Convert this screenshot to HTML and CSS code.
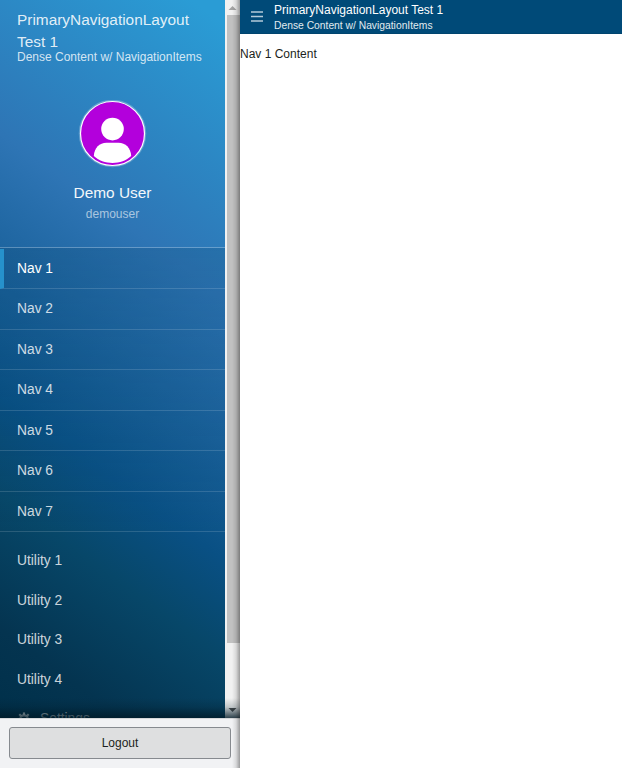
FILE: index.html
```html
<!DOCTYPE html>
<html lang="en">
<head>
<meta charset="utf-8">
<title>PrimaryNavigationLayout Test 1</title>
<link rel="stylesheet" href="styles.css">
</head>
<body>
<div class="layout">
  <aside class="drawer">
    <div class="viewport">
      <div class="menu">
        <header class="brand">
          <div class="brand-title">PrimaryNavigationLayout Test 1</div>
          <div class="brand-sub">Dense Content w/ NavigationItems</div>
        </header>
        <section class="user">
          <svg class="avatar" viewBox="0 0 69 68" width="69" height="68">
            <g transform="translate(.5 -.5)">
            <circle cx="34" cy="34" r="33" fill="none" stroke="#fff" stroke-opacity=".25" stroke-width="1.5"/>
            <circle cx="34" cy="34" r="32" fill="#b300dc" stroke="#fff" stroke-width="1.2"/>
            <circle cx="34" cy="29.6" r="11.3" fill="#fff"/>
            <path d="M15.3 56.5C15.8 48.500 21 43.300 28 43.300h12c7 0 12.200 5.200 12.700 13.200C48 61 41 63.400 34 63.400S20 61 15.300 56.500z" fill="#fff"/>
            </g>
          </svg>
          <div class="user-name">Demo User</div>
          <div class="user-id">demouser</div>
        </section>
        <nav class="pages">
          <a class="page active">Nav 1</a>
          <a class="page">Nav 2</a>
          <a class="page">Nav 3</a>
          <a class="page">Nav 4</a>
          <a class="page">Nav 5</a>
          <a class="page">Nav 6</a>
          <a class="page">Nav 7</a>
        </nav>
        <div class="utilities">
          <a class="utility">Utility 1</a>
          <a class="utility">Utility 2</a>
          <a class="utility">Utility 3</a>
          <a class="utility">Utility 4</a>
          <a class="utility"><svg class="gear" viewBox="0 0 14 14" width="14" height="14"><circle cx="7" cy="7" r="3.700" fill="none" stroke="currentColor" stroke-width="2.200"/><path d="M7 .5v2.500M7 11v2.500M.5 7H3M11 7h2.500M2.300 2.300l2 2M9.700 9.700l2 2M11.700 2.300l-2 2M4.300 9.700l-2 2" stroke="currentColor" stroke-width="2.200"/></svg>Settings</a>
        </div>
      </div>
      <div class="scrollbar">
        <svg width="15" height="15"><path d="M3.500 10h8L7.500 6z" fill="#a3a3a3"/></svg>
        <div class="thumb"></div>
        <svg width="15" height="15"><path d="M3.500 5h8L7.500 9z" fill="#505050"/></svg>
      </div>
    </div>
    <footer class="footer"><button class="logout">Logout</button></footer>
  </aside>
  <main class="main">
    <header class="bar">
      <svg class="burger" width="12" height="11"><path d="M0 1h12M0 5.500h12M0 10h12" stroke="#b3cad9" stroke-width="1.700"/></svg>
      <div>
        <div class="bar-title">PrimaryNavigationLayout Test 1</div>
        <div class="bar-sub">Dense Content w/ NavigationItems</div>
      </div>
    </header>
    <div class="content">Nav 1 Content</div>
  </main>
</div>
</body>
</html>
```
FILE: styles.css
```css
* { box-sizing: border-box; }
body { margin: 0; font-family: "Liberation Sans", Arial, sans-serif; overflow: hidden; }
.layout { display: flex; height: 768px; }
.drawer { width: 240px; display: flex; flex-direction: column; position: relative; }
.drawer::after {
  content: ""; position: absolute; inset: 0 0 0 auto; width: 8px;
  background: linear-gradient(to right, transparent, rgba(0,0,0,.1) 50%, rgba(0,0,0,.36));
}
.viewport {
  height: 718px; display: flex; overflow: hidden; position: relative;
  background: linear-gradient(36deg, #00304a 0%, #043450 10%, #074769 25%, #095084 36%, #2e75b5 65.500%, #2a9cd5 96%);
}
.viewport::after {
  content: ""; position: absolute; inset: auto 0 0 0; height: 20px;
  background: linear-gradient(to bottom, transparent, rgba(0,25,38,.2) 45%, rgba(0,25,38,.8));
}
.menu { width: 225px; color: rgba(255,255,255,.8); }
.brand { height: 100px; padding: 9px 17px 0; }
.brand-title { font-size: 15.400px; line-height: 22px; color: rgba(255,255,255,.87); }
.brand-sub { font-size: 12px; line-height: 14px; margin-top: -3px; white-space: nowrap; }
.user { height: 147px; text-align: center; }
.avatar { display: block; margin-left: 78px; }
.user-name { margin-top: 13.500px; font-size: 15.400px; line-height: 22px; color: #f4f8fb; }
.user-id { margin-top: 2px; font-size: 12px; line-height: 16px; color: rgba(255,255,255,.6); }
.pages {
  padding-top: .6px;
  border-top: 1px solid rgba(255,255,255,.27);
  background: linear-gradient(rgba(0,57,92,.17), rgba(0,57,92,0));
}
.page {
  display: flex; align-items: center; height: 40.500px; padding-left: 17px;
  font-size: 13.800px; border-bottom: 1px solid rgba(255,255,255,.14);
}
.active { color: #fff; border-left: 4px solid #2691cb; padding-left: 13px; }
.utilities { padding-top: 8.800px; }
.utility { display: flex; align-items: center; height: 39.500px; padding-left: 17px; font-size: 13.800px; }
.gear { margin-right: 9px; }
.scrollbar { width: 15px; background: #f1f1f1; display: flex; flex-direction: column; }
.thumb { width: 13px; height: 628px; margin: 0 0 60px 2px; background: #c1c1c1; }
.footer { height: 50px; padding: 8px 9px; background: #f1f2f4; border-top: 1px solid #d5d7d9; }
.logout {
  display: block; width: 222px; height: 32px; padding: 0; background: #dedfe0;
  border: 1px solid #868a8f; border-radius: 3px; font: 12px "Liberation Sans", Arial, sans-serif; color: #1c1f21;
}
.main { flex: 1; }
.bar { height: 34px; background: #004a78; border-bottom: 1px solid #00446e; display: flex; color: #fff; }
.burger { margin: 11px 11px 0; }
.bar-title { font-size: 12px; line-height: 14px; margin-top: 3px; }
.bar-sub { font-size: 10.300px; line-height: 12px; margin-top: 3px; color: #e0eaf0; }
.content { margin-top: 13px; font-size: 12px; line-height: 14px; color: #1c1f21; }
```
